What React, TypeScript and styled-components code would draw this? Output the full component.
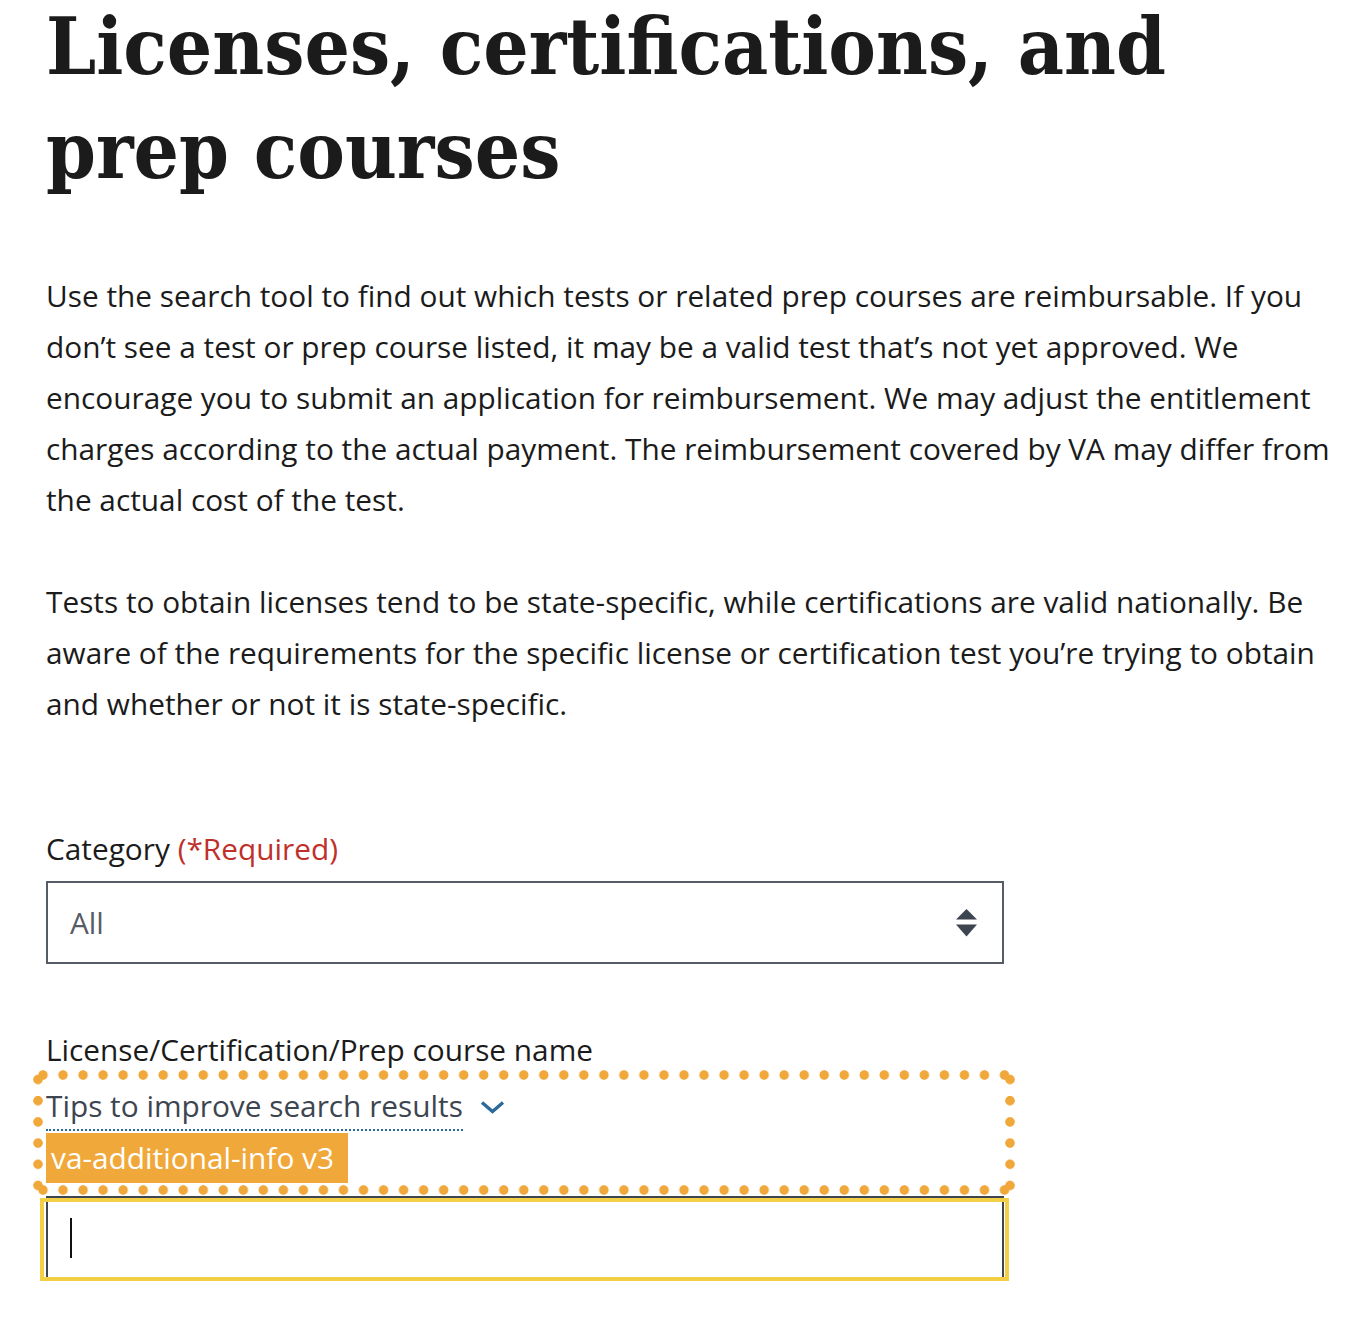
import React from "react";
import styled, { createGlobalStyle } from "styled-components";

const GlobalStyle = createGlobalStyle`
  body {
    margin: 0;
    background: #ffffff;
    color: #1b1b1b;
    font-family: "Open Sans", "Noto Sans", sans-serif;
  }
`;

const Page = styled.main`
  padding: 0 0 40px 46px;
  width: 1304px;
`;

const Title = styled.h1`
  margin: -6px 0 0;
  font-family: "DejaVu Serif Condensed", "DejaVu Serif", serif;
  font-weight: 700;
  font-size: 79.4px;
  line-height: 104px;
  color: #1b1b1b;
`;

const Intro = styled.div`
  margin-top: 68px;
  display: flex;
  flex-direction: column;
  gap: 51px;
`;

const Paragraph = styled.p`
  margin: 0;
  font-size: 29.8px;
  line-height: 51px;
`;

const Form = styled.form`
  margin-top: 94px;
  width: 958px;
  display: flex;
  flex-direction: column;
`;

const Label = styled.label<{ $top?: number }>`
  display: block;
  margin-top: ${(p) => p.$top ?? 0}px;
  font-size: 29.8px;
  line-height: 51px;
  color: #1b1b1b;
`;

const Required = styled.span`
  color: #c0302b;
`;

const SelectBox = styled.div`
  margin-top: 7px;
  height: 83px;
  box-sizing: border-box;
  border: 2px solid #565c65;
  display: flex;
  align-items: center;
  justify-content: space-between;
  padding: 0 25px 0 22px;
  font-size: 29.8px;
  color: #565c65;
`;

const dot = "radial-gradient(circle, #f1a83b 4.4px, transparent 5.1px)";

const AdditionalInfo = styled.div`
  position: relative;
  padding: 8px 0 13px;
  display: flex;
  flex-direction: column;
  align-items: flex-start;

  /* dotted highlight drawn around the web component */
  &::before {
    content: "";
    position: absolute;
    left: -13px;
    right: -11px;
    top: -5px;
    bottom: 1px;
    pointer-events: none;
    background:
      ${dot} left top / 20px 10px space no-repeat,
      ${dot} left bottom / 20px 10px space no-repeat,
      ${dot} left top / 10px 19px no-repeat space,
      ${dot} right top / 10px 19px no-repeat space;
  }
`;

const Trigger = styled.button`
  display: flex;
  align-items: center;
  gap: 17px;
  padding: 0;
  border: none;
  background: none;
  font-family: inherit;
  font-size: 29.8px;
  line-height: 46px;
  color: #3d4551;
  cursor: pointer;
`;

const TriggerText = styled.span`
  border-bottom: 2px dotted #2b6a99;
`;

const Tag = styled.span`
  margin-top: 2px;
  padding: 0 14px 0 5px;
  background: #f1a83b;
  color: #ffffff;
  font-size: 29.8px;
  line-height: 50px;
`;

const InputWrap = styled.div`
  position: relative;
  height: 83px;

  /* focus ring */
  &::after {
    content: "";
    position: absolute;
    left: -6px;
    right: -5px;
    top: 2px;
    bottom: -2px;
    border: 4px solid #f3cf45;
    pointer-events: none;
  }
`;

const TextField = styled.div`
  box-sizing: border-box;
  height: 100%;
  border: 2px solid #3d4551;
  display: flex;
  align-items: center;
  padding-left: 22px;
`;

const Caret = styled.span`
  width: 2px;
  height: 40px;
  background: #111111;
`;

function SortArrows() {
  return (
    <svg width="21" height="28" viewBox="0 0 21 28" aria-hidden="true">
      <path d="M10.5 0 L21 10.5 H0 Z" fill="#3d4551" />
      <path d="M0 15.5 H21 L10.5 27.5 Z" fill="#3d4551" />
    </svg>
  );
}

function ChevronDown() {
  return (
    <svg width="25" height="14" viewBox="0 0 25 14" aria-hidden="true">
      <path d="M2 2.5 L12.5 11.5 L23 2.5" fill="none" stroke="#2b6a99" strokeWidth="3.4" />
    </svg>
  );
}

export default function App() {
  return (
    <>
      <GlobalStyle />
      <Page>
        <Title>Licenses, certifications, and prep courses</Title>
        <Intro>
          <Paragraph>
            Use the search tool to find out which tests or related prep courses are reimbursable. If you
            don’t see a test or prep course listed, it may be a valid test that’s not yet approved. We
            encourage you to submit an application for reimbursement. We may adjust the entitlement
            charges according to the actual payment. The reimbursement covered by VA may differ from
            the actual cost of the test.
          </Paragraph>
          <Paragraph>
            Tests to obtain licenses tend to be state-specific, while certifications are valid nationally. Be
            aware of the requirements for the specific license or certification test you’re trying to obtain
            and whether or not it is state-specific.
          </Paragraph>
        </Intro>
        <Form onSubmit={(e) => e.preventDefault()}>
          <Label>
            Category <Required>(*Required)</Required>
          </Label>
          <SelectBox role="combobox" aria-label="Category">
            <span>All</span>
            <SortArrows />
          </SelectBox>
          <Label $top={60}>License/Certification/Prep course name</Label>
          <AdditionalInfo>
            <Trigger type="button">
              <TriggerText>Tips to improve search results</TriggerText>
              <ChevronDown />
            </Trigger>
            <Tag>va-additional-info v3</Tag>
          </AdditionalInfo>
          <InputWrap>
            <TextField>
              <Caret />
            </TextField>
          </InputWrap>
        </Form>
      </Page>
    </>
  );
}
